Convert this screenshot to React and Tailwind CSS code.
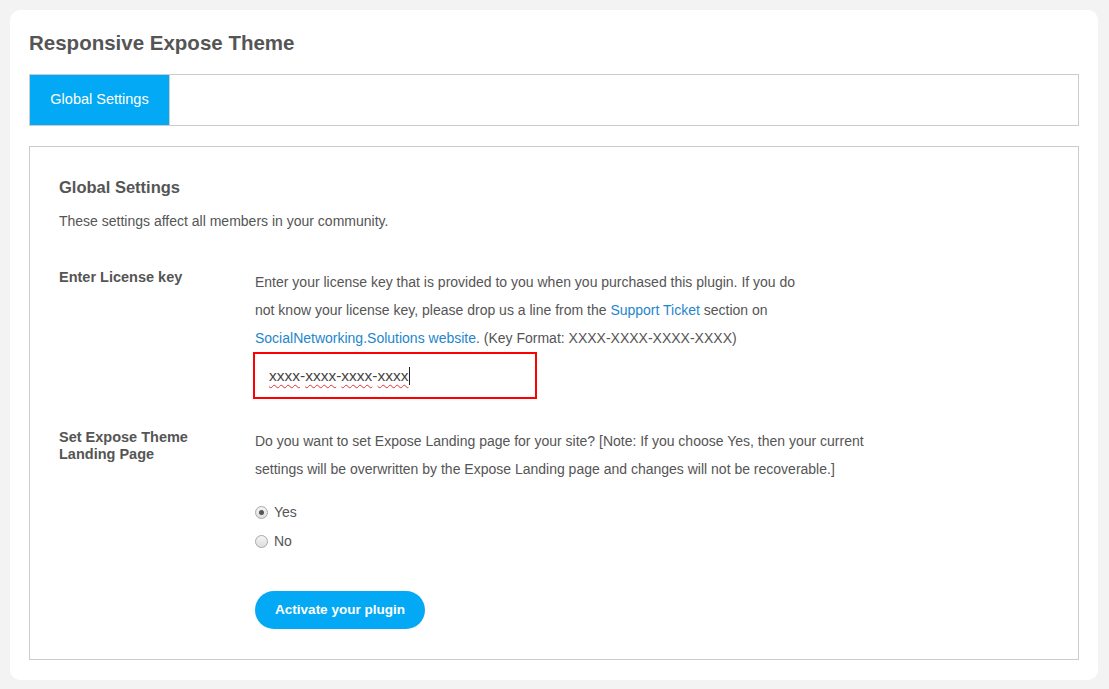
import React from 'react';

const font = { fontFamily: '"Liberation Sans", Arial, sans-serif' };

const Radio = ({ checked, label }) => (
    <label className="flex items-center gap-[6px] h-[16px] text-[#555]">
        <span className="w-[13px] h-[13px] rounded-full border border-[#a8a8a8] bg-gradient-to-b from-[#f4f4f4] to-[#dedede] flex items-center justify-center">
            {checked && <span className="w-[5px] h-[5px] rounded-full bg-[#555]" />}
        </span>
        <span className="text-[14px]">{label}</span>
    </label>
);

const KeyPart = ({ children }) => (
    <span className="underline decoration-wavy decoration-[#e0303a] decoration-1 underline-offset-[3px]">{children}</span>
);

export default function App() {
    return (
        <div className="min-h-screen bg-[#f3f3f3] pt-[10px] pl-[10px] pr-[11px] pb-[10px]" style={font}>
            <div className="bg-white rounded-[10px] pt-[21px] px-[19px] pb-[20px]">
                {/* Title */}
                <h1 className="text-[20.5px] leading-[24px] font-bold text-[#555]">Responsive Expose Theme</h1>

                {/* Tabs */}
                <div className="mt-[19px] border border-[#cccccc] flex h-[52px]">
                    <div className="w-[139px] bg-[#03a9f4] text-white text-[14.5px] flex items-center justify-center">
                        Global Settings
                    </div>
                    <div className="flex-1 border-l border-[#cccccc]" />
                </div>

                {/* Content box */}
                <div className="mt-[20px] border border-[#cccccc] pt-[30px] pl-[29px] pr-[29px] pb-[30px]">
                    <h2 className="text-[16.5px] leading-[20px] font-bold text-[#555]">Global Settings</h2>
                    <p className="mt-[16px] text-[14px] leading-[17px] text-[#555]">
                        These settings affect all members in your community.
                    </p>

                    {/* License key row */}
                    <div className="flex mt-[38px]">
                        <div className="w-[196px] text-[14.5px] leading-[17px] font-bold text-[#555] pt-[1px]">Enter License key</div>
                        <div className="flex-1">
                            <div className="text-[14px] leading-[28px] text-[#555]">
                                Enter your license key that is provided to you when you purchased this plugin. If you do<br />
                                not know your license key, please drop us a line from the{' '}
                                <a className="text-[#1d86cc]">Support Ticket</a> section on<br />
                                <a className="text-[#1d86cc]">SocialNetworking.Solutions website</a>. (Key Format: XXXX-XXXX-XXXX-XXXX)
                            </div>
                            <div className="-ml-[2px] w-[284px] h-[47px] border-2 border-[#ff0000] flex items-center pl-[14px] text-[15.5px] text-[#444]">
                                <KeyPart>xxxx</KeyPart>-<KeyPart>xxxx</KeyPart>-<KeyPart>xxxx</KeyPart>-<KeyPart>xxxx</KeyPart>
                                <span className="w-px h-[18px] bg-[#222]" />
                            </div>
                        </div>
                    </div>

                    {/* Landing page row */}
                    <div className="flex mt-[28px]">
                        <div className="w-[196px] text-[14.5px] leading-[17px] font-bold text-[#555] pt-[2px]">
                            Set Expose Theme<br />Landing Page
                        </div>
                        <div className="flex-1">
                            <div className="text-[14px] leading-[28px] text-[#555]">
                                Do you want to set Expose Landing page for your site? [Note: If you choose Yes, then your current<br />
                                settings will be overwritten by the Expose Landing page and changes will not be recoverable.]
                            </div>
                            <div className="mt-[21px] flex flex-col gap-[13px]">
                                <Radio checked label="Yes" />
                                <Radio label="No" />
                            </div>
                            <button className="mt-[42px] w-[170px] h-[38px] rounded-full bg-[#03a9f4] text-white text-[13.5px] font-bold">
                                Activate your plugin
                            </button>
                        </div>
                    </div>
                </div>
            </div>
        </div>
    );
}
